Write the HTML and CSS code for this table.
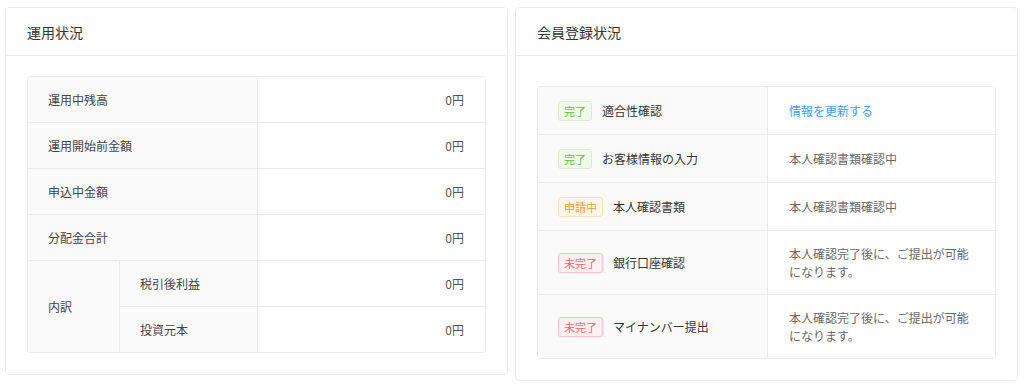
FILE: index.html
```html
<!DOCTYPE html>
<html lang="ja">
<head>
<meta charset="utf-8">
<title>運用状況</title>
<link rel="stylesheet" href="styles.css">
</head>
<body>
<div class="page">
  <section class="card">
    <header class="card-header">運用状況</header>
    <div class="card-body card-body--left">
      <table class="info-table">
        <colgroup><col class="c-sub"><col class="c-sub2"><col></colgroup>
        <tbody>
          <tr><th colspan="2">運用中残高</th><td class="num">0円</td></tr>
          <tr><th colspan="2">運用開始前金額</th><td class="num">0円</td></tr>
          <tr><th colspan="2">申込中金額</th><td class="num">0円</td></tr>
          <tr><th colspan="2">分配金合計</th><td class="num">0円</td></tr>
          <tr><th rowspan="2" class="group">内訳</th><th>税引後利益</th><td class="num">0円</td></tr>
          <tr><th>投資元本</th><td class="num">0円</td></tr>
        </tbody>
      </table>
    </div>
  </section>
  <section class="card">
    <header class="card-header">会員登録状況</header>
    <div class="card-body card-body--right">
      <table class="info-table status-table">
        <colgroup><col class="c-half"><col></colgroup>
        <tbody>
          <tr><th><div class="status"><span class="tag tag--ok">完了</span><span>適合性確認</span></div></th><td><a class="link" href="#">情報を更新する</a></td></tr>
          <tr><th><div class="status"><span class="tag tag--ok">完了</span><span>お客様情報の入力</span></div></th><td>本人確認書類確認中</td></tr>
          <tr><th><div class="status"><span class="tag tag--warn">申請中</span><span>本人確認書類</span></div></th><td>本人確認書類確認中</td></tr>
          <tr><th><div class="status"><span class="tag tag--ng">未完了</span><span>銀行口座確認</span></div></th><td>本人確認完了後に、ご提出が可能になります。</td></tr>
          <tr><th><div class="status"><span class="tag tag--ng">未完了</span><span>マイナンバー提出</span></div></th><td>本人確認完了後に、ご提出が可能になります。</td></tr>
        </tbody>
      </table>
    </div>
  </section>
</div>
</body>
</html>
```
FILE: styles.css
```css
* { box-sizing: border-box; }
html, body { margin: 0; padding: 0; background: #fff; }
body {
  font-family: "Noto Sans CJK JP", "Noto Sans", "Liberation Sans", sans-serif;
  color: #555;
}
.page {
  display: flex;
  align-items: flex-start;
  gap: 7px;
  padding: 7px 6px 0 5px;
}
.card {
  flex: 1 1 0;
  min-width: 0;
  border: 1px solid #ebebeb;
  border-radius: 4px;
  background: #fff;
}
.card-header {
  height: 48px;
  display: flex;
  align-items: center;
  padding: 0 21px;
  font-size: 14px;
  color: #333;
  border-bottom: 1px solid #ebebeb;
}
.card-body--left { padding: 20px 21px 21px 21px; }
.card-body--right { padding: 30px 21px 21px 21px; }

.info-table {
  width: 100%;
  table-layout: fixed;
  border-collapse: separate;
  border-spacing: 0;
  border: 1px solid #eaeaea;
  border-radius: 4px;
  overflow: hidden;
  font-size: 12px;
  line-height: 18px;
}
.c-sub { width: 92px; }
.c-sub2 { width: 138px; }
.c-half { width: 230px; }
.info-table th,
.info-table td {
  padding: 13.5px 21px 13.5px 20px;
  text-align: left;
  font-weight: normal;
  vertical-align: middle;
  border-bottom: 1px solid #eaeaea;
}
.info-table tr:last-child th,
.info-table tr:last-child td { border-bottom: none; }
.info-table th {
  background: #fafafa;
  color: #444;
  border-right: 1px solid #eaeaea;
}
.info-table th.group { border-bottom: none; }
.info-table td { background: #fff; color: #555; }
.info-table td.num { text-align: right; padding-right: 21px; }
.status-table td { padding-left: 21px; color: #666; }

.status {
  display: flex;
  align-items: center;
  gap: 10px;
  color: #333;
}
.tag {
  display: inline-flex;
  align-items: center;
  height: 20px;
  padding: 0 5px;
  font-size: 11px;
  line-height: 18px;
  border: 1px solid;
  border-radius: 3px;
  white-space: nowrap;
}
.tag--ok { background: #f0f9eb; border-color: #d6efc4; color: #67c23a; }
.tag--warn { background: #fdf6ec; border-color: #f8dfb8; color: #e6a23c; }
.tag--ng { background: #fef0f0; border-color: #fbc4c4; color: #f56c6c; }
.link { color: #409eff; text-decoration: none; }
```
